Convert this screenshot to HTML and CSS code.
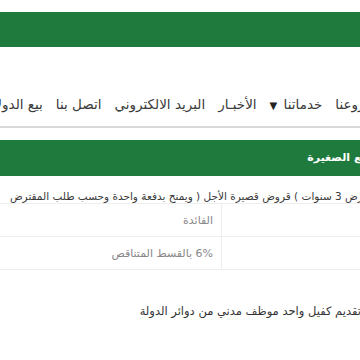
FILE: index.html
```html
<!DOCTYPE html>
<html lang="ar" dir="rtl">
<head>
  <meta charset="UTF-8">
  <title>قروض المشاريع الصغيرة</title>
  <link rel="stylesheet" href="styles.css">
</head>
<body>

<div class="page">
  <div class="topbar"></div>

  <ul class="nav">
    <li>فروعنا</li>
    <li>خدماتنا <span class="caret">▼</span></li>
    <li>الأخبـار</li>
    <li>البريد الالكتروني</li>
    <li>اتصل بنا</li>
    <li>بيع الدولار للمسافرين</li>
  </ul>

  <h3 class="title">قروض المشاريع الصغيرة</h3>

  <p class="desc">( قرض 3 سنوات ) قروض قصيرة الأجل ( ويمنح بدفعة واحدة وحسب طلب المقترض</p>

  <table class="info">
    <tr>
      <td></td>
      <td>الفائدة</td>
    </tr>
    <tr>
      <td></td>
      <td>6% بالقسط المتناقص</td>
    </tr>
  </table>

  <p class="note">تقديم كفيل واحد موظف مدني من دوائر الدولة</p>
</div>

</body>
</html>
```

FILE: styles.css
```css
html, body { margin: 0; padding: 0; background: #fff; overflow: hidden; }
body { font-family: "DejaVu Sans", sans-serif; color: #333; }
.page { width: 360px; direction: rtl; }

.topbar { height: 35px; margin-top: 12px; background: #1f7a3d; }

.nav { list-style: none; margin: 0 -12px 0 0; padding: 48px 0 11px; display: flex; gap: 13px; white-space: nowrap; font-size: 13.5px; line-height: 18px; color: #3a3a3a; border-bottom: 2px solid #d9d9d9; }
.nav .caret { font-size: 10px; color: #222; margin-right: 2px; }

.title { margin: 12px -82px 0 0; height: 36px; line-height: 36px; padding: 0; background: #1f7a3d; color: #fff; font-size: 11px; font-weight: bold; white-space: nowrap; }

.desc { margin: 0 -16px 0 0; padding: 12px 0 0; height: 15px; line-height: 16px; white-space: nowrap; font-size: 10.5px; color: #3a3a3a; border-bottom: 1px solid #eee; }

.info { border-collapse: collapse; width: 100%; font-size: 11px; color: #888; }
.info td { height: 32px; padding: 0 8px; border-bottom: 1px solid #eee; }
.info td:first-child { width: 122px; border-left: 1px solid #eee; }

.note { margin: 33px -1px 0 0; font-size: 11.5px; line-height: 16px; color: #333; white-space: nowrap; }
```
